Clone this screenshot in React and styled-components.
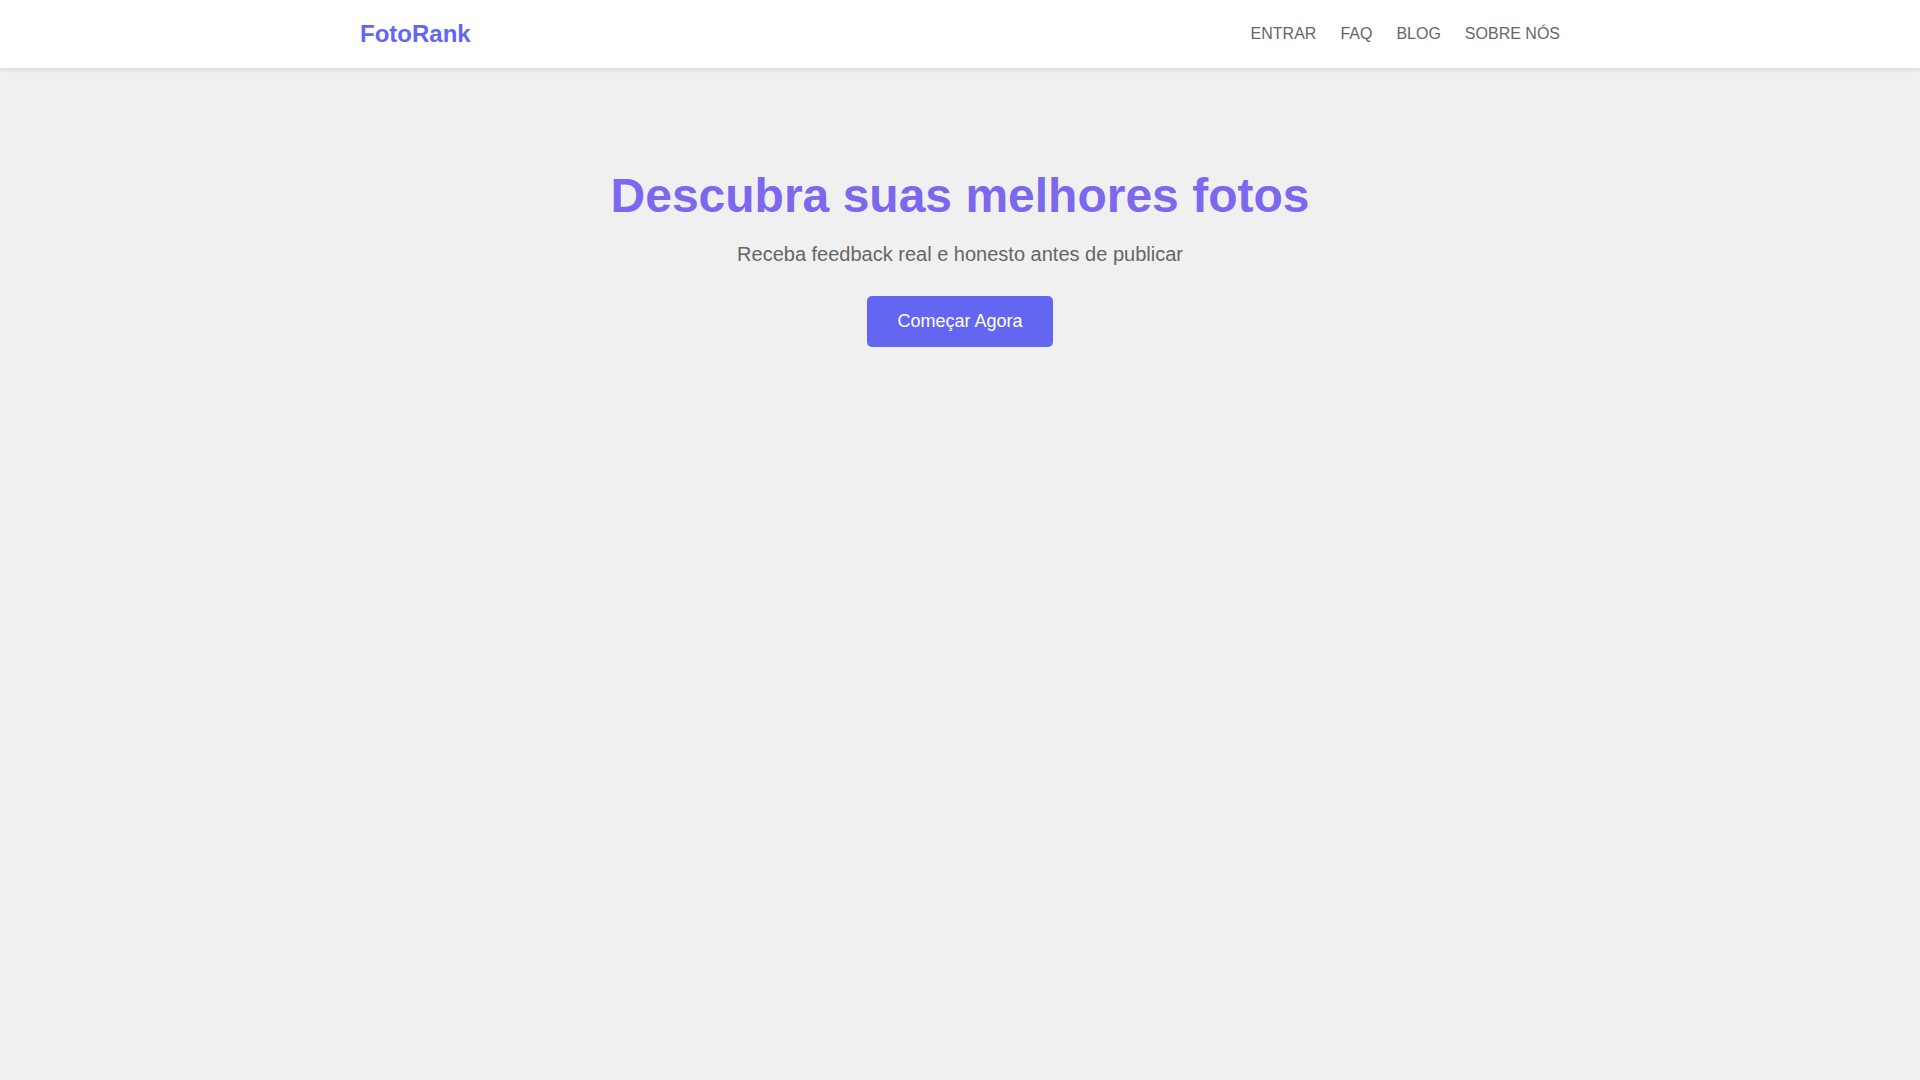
import React from "react";
import styled, { createGlobalStyle } from "styled-components";

const GlobalStyle = createGlobalStyle`
  * { box-sizing: border-box; }
  html, body {
    margin: 0;
    padding: 0;
    background: #f0f0f0;
    font-family: "Liberation Sans", Arial, sans-serif;
  }
`;

const Header = styled.header`
  background: #fff;
  height: 68px;
  box-shadow: 0 2px 4px rgba(0, 0, 0, 0.1);
  position: relative;
  z-index: 1;
`;

const Container = styled.div`
  width: 1200px;
  margin: 0 auto;
  height: 100%;
  display: flex;
  align-items: center;
  justify-content: space-between;
`;

const Logo = styled.a`
  font-size: 24px;
  font-weight: bold;
  color: #6366f1;
  text-decoration: none;
`;

const Nav = styled.nav`
  display: flex;
  gap: 24px;
`;

const NavLink = styled.a`
  font-size: 16px;
  color: #666;
  text-decoration: none;
  text-transform: uppercase;
`;

const Hero = styled.main`
  display: flex;
  flex-direction: column;
  align-items: center;
  text-align: center;
  padding-top: 100px;
  min-height: calc(100vh - 68px);
`;

const Title = styled.h1`
  margin: 0;
  font-size: 48px;
  font-weight: bold;
  color: #7b68ee;
`;

const Subtitle = styled.p`
  margin: 20px 0 0;
  font-size: 20px;
  color: #666;
`;

const Button = styled.button`
  margin-top: 30px;
  padding: 15px 30px;
  font-family: inherit;
  font-size: 18px;
  color: #fff;
  background: #6366f1;
  border: none;
  border-radius: 5px;
  cursor: pointer;
`;

const links = ["Entrar", "FAQ", "Blog", "Sobre Nós"];

const App = () => (
  <>
    <GlobalStyle />
    <Header>
      <Container>
        <Logo href="#">FotoRank</Logo>
        <Nav>
          {links.map((l) => (
            <NavLink key={l} href="#">
              {l}
            </NavLink>
          ))}
        </Nav>
      </Container>
    </Header>
    <Hero>
      <Title>Descubra suas melhores fotos</Title>
      <Subtitle>Receba feedback real e honesto antes de publicar</Subtitle>
      <Button>Começar Agora</Button>
    </Hero>
  </>
);

export default App;
